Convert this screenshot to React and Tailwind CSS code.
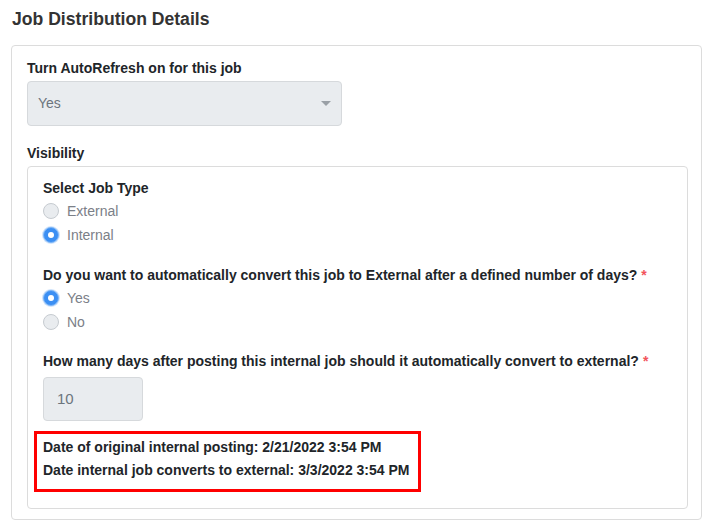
import React from 'react';

function Radio({ checked, label }) {
    return (
        <label className="flex items-center gap-2 h-6">
            {checked ? (
                <span className="w-4 h-4 rounded-full bg-[#3b8ff3] border border-[#7db6f7] flex items-center justify-center shadow-[0_0_0_1px_#cfe3fb]">
                    <span className="w-1.5 h-1.5 rounded-full bg-white"></span>
                </span>
            ) : (
                <span className="w-4 h-4 rounded-full bg-[#e9ecef] border border-[#c6cbd0]"></span>
            )}
            <span className="text-[14px] text-[#7b8088]">{label}</span>
        </label>
    );
}

function Required() {
    return <span className="text-[#f2545b] ml-1">*</span>;
}

export default function App() {
    return (
        <div className="bg-white min-h-screen w-[717px] h-[530px] text-[#212529] pt-[9px] pl-[12px]" style={{ fontFamily: '"Liberation Sans", Arial, sans-serif' }}>
            <h1 className="text-[17.6px] font-bold leading-5 text-[#333]">Job Distribution Details</h1>
            <div className="mt-[16px] w-[691px] h-[475px] border border-[#dcdcdc] rounded-[4px] -ml-[1px] pt-[14px] pl-[15px]">
                <div className="text-[14px] font-bold leading-4">Turn AutoRefresh on for this job</div>
                <div className="mt-[5px] w-[315px] h-[45px] bg-[#e9ecef] border border-[#d6d9dc] rounded-[4px] flex items-center justify-between pl-[10px] pr-[10px]">
                    <span className="text-[14px] text-[#6c757d]">Yes</span>
                    <svg width="10" height="6" viewBox="0 0 10 6"><path d="M0 0h10L5 5z" fill="#9aa0a6" /></svg>
                </div>
                <div className="mt-[19px] text-[14px] font-bold leading-4">Visibility</div>
                <div className="mt-[5px] w-[661px] h-[343px] border border-[#dcdcdc] rounded-[4px] pt-[13px] pl-[15px]">
                    <div className="text-[14px] font-bold leading-4">Select Job Type</div>
                    <div className="mt-[3px]">
                        <Radio checked={false} label="External" />
                        <Radio checked={true} label="Internal" />
                    </div>
                    <div className="mt-[20px] text-[14px] font-bold leading-4">
                        Do you want to automatically convert this job to External after a defined number of days?<Required />
                    </div>
                    <div className="mt-[3px]">
                        <Radio checked={true} label="Yes" />
                        <Radio checked={false} label="No" />
                    </div>
                    <div className="mt-[19px] text-[14px] font-bold leading-4">
                        How many days after posting this internal job should it automatically convert to external?<Required />
                    </div>
                    <div className="mt-[8px] w-[100px] h-[44px] bg-[#e9ecef] border border-[#d6d9dc] rounded-[4px] flex items-center pl-[13px]">
                        <span className="text-[15px] text-[#6c757d]">10</span>
                    </div>
                    <div className="mt-[10px] -ml-[9px] w-[387px] h-[61px] border-[3px] border-[#ff0000] pl-[6px] pt-[5px] flex flex-col gap-[7px]">
                        <div className="text-[14px] font-bold leading-4">Date of original internal posting: 2/21/2022 3:54 PM</div>
                        <div className="text-[14px] font-bold leading-4">Date internal job converts to external: 3/3/2022 3:54 PM</div>
                    </div>
                </div>
            </div>
        </div>
    );
}
